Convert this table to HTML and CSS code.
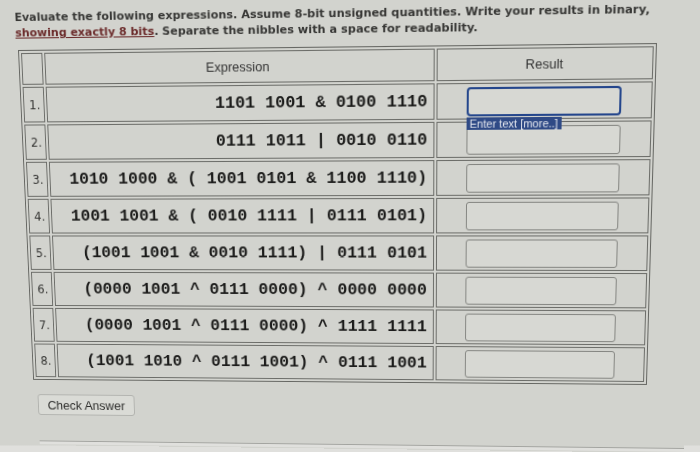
FILE: index.html
```html
<!DOCTYPE html>
<html lang="en">
<head>
<meta charset="utf-8">
<title>Binary expressions</title>
<link rel="stylesheet" href="styles.css">
</head>
<body>
<div class="screen">
  <p class="intro">Evaluate the following expressions. Assume 8-bit unsigned quantities. Write your results in binary,<br><span class="em">showing exactly 8 bits</span>. Separate the nibbles with a space for readability.</p>
  <table class="quiz">
    <thead>
      <tr><th class="num"></th><th class="expr-h">Expression</th><th class="res-h">Result</th></tr>
    </thead>
    <tbody>
      <tr><td class="num">1.</td><td class="expr">1101 1001 &amp; 0100 1110</td><td class="res"><div class="field"><input class="answer focused" type="text"><span class="tip">Enter text [more..]</span></div></td></tr>
      <tr><td class="num">2.</td><td class="expr">0111 1011 | 0010 0110</td><td class="res"><div class="field"><input class="answer" type="text"></div></td></tr>
      <tr><td class="num">3.</td><td class="expr">1010 1000 &amp; ( 1001 0101 &amp; 1100 1110)</td><td class="res"><div class="field"><input class="answer" type="text"></div></td></tr>
      <tr><td class="num">4.</td><td class="expr">1001 1001 &amp; ( 0010 1111 | 0111 0101)</td><td class="res"><div class="field"><input class="answer" type="text"></div></td></tr>
      <tr><td class="num">5.</td><td class="expr">(1001 1001 &amp; 0010 1111) | 0111 0101</td><td class="res"><div class="field"><input class="answer" type="text"></div></td></tr>
      <tr><td class="num">6.</td><td class="expr">(0000 1001 ^ 0111 0000) ^ 0000 0000</td><td class="res"><div class="field"><input class="answer" type="text"></div></td></tr>
      <tr><td class="num">7.</td><td class="expr">(0000 1001 ^ 0111 0000) ^ 1111 1111</td><td class="res"><div class="field"><input class="answer" type="text"></div></td></tr>
      <tr><td class="num">8.</td><td class="expr">(1001 1010 ^ 0111 1001) ^ 0111 1001</td><td class="res"><div class="field"><input class="answer" type="text"></div></td></tr>
    </tbody>
  </table>
  <button class="check" type="button">Check Answer</button>
  <div class="footer"></div>
</div>
</body>
</html>
```
FILE: styles.css
```css
html, body {
  margin: 0;
  padding: 0;
  width: 700px;
  height: 452px;
  overflow: hidden;
}

body {
  background: linear-gradient(to bottom, #d2d3ce 0, #d2d3ce 445px, #e0e0dd 446px);
}

.screen {
  width: 696px;
  height: 452px;
  overflow: hidden;
  background: #d2d3ce;
  transform-origin: 0 0;
  transform: matrix3d(0.9679, -0.013444, 0, -0.000056609, 0.04972, 1.04203, 0, 0.000122225, 0, 0, 1, 0, -1.8164, -1.6044, 0, 1);
  font-family: "Liberation Sans", Arial, sans-serif;
  color: #333;
}

.intro {
  margin: 0;
  padding: 11px 0 0 16px;
  height: 30px;
  font-family: "DejaVu Sans", Verdana, sans-serif;
  font-size: 11.3px;
  line-height: 15px;
  font-weight: bold;
  color: #383836;
  white-space: nowrap;
}

.em {
  color: #6b2b2b;
  text-decoration: underline;
}

.quiz {
  margin: 9px 0 0 18px;
  width: 639px;
  table-layout: fixed;
  border-collapse: separate;
  border-spacing: 2px;
  border: 1px solid #666763;
}

.quiz th,
.quiz td {
  box-sizing: border-box;
  border: 1px solid #6c6d69;
  padding: 0;
}

.quiz th {
  height: 31px;
  font-size: 13px;
  font-weight: normal;
  color: #333;
  text-align: center;
  vertical-align: middle;
}

.quiz td {
  height: 35px;
  vertical-align: middle;
}

.quiz .num {
  width: 22px;
  padding-left: 5px;
  font-family: "DejaVu Sans", Verdana, sans-serif;
  font-size: 12px;
  color: #353533;
  text-align: left;
}

.quiz .expr-h,
.quiz .expr {
  width: 395px;
}

.quiz .res-h,
.quiz .res {
  width: 212px;
}

.quiz .expr {
  padding-right: 6px;
  text-align: right;
  white-space: nowrap;
  font-family: "Liberation Mono", "Courier New", monospace;
  font-weight: bold;
  font-size: 17px;
  color: #1c1c1b;
}

.field {
  position: relative;
  width: 152px;
  margin: 0 auto;
}

.answer {
  display: block;
  box-sizing: border-box;
  width: 152px;
  height: 28px;
  margin: 0;
  border: 1px solid #858682;
  border-radius: 3px;
  background: #d7d8d3;
  outline: none;
}

.answer.focused {
  border: 2px solid #24468c;
  border-radius: 4px;
}

.tip {
  position: absolute;
  z-index: 2;
  left: 0;
  top: 29px;
  padding: 0 4px 0 3px;
  background: #2f4a86;
  color: #e4e7ef;
  font-size: 11px;
  line-height: 12px;
  white-space: nowrap;
}

.check {
  display: block;
  box-sizing: border-box;
  width: 104px;
  height: 22px;
  margin: 15px 0 0 22px;
  padding: 0;
  border: 1px solid #b2b3af;
  border-radius: 3px;
  background: #dadbd6;
  color: #2e2e2c;
  font-family: "Liberation Sans", Arial, sans-serif;
  font-size: 13px;
}

.footer {
  margin: 27px 0 0 22px;
  height: 3px;
  border-top: 1px solid #a3a4a0;
  background: #e0e0dd;
}
```
